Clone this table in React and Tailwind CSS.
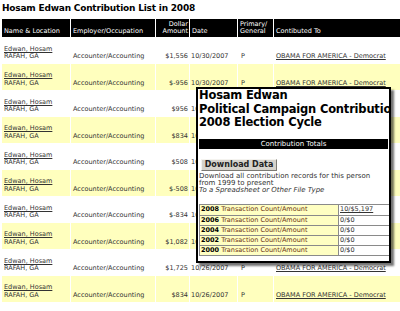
import React from 'react';

const rows = [
  { amount: '$1,556', date: '10/30/2007' },
  { amount: '$-956', date: '10/30/2007' },
  { amount: '$956', date: '10/30/2007' },
  { amount: '$834', date: '10/30/2007' },
  { amount: '$508', date: '10/30/2007' },
  { amount: '$-508', date: '10/30/2007' },
  { amount: '$-834', date: '10/30/2007' },
  { amount: '$1,082', date: '10/30/2007' },
  { amount: '$1,725', date: '10/26/2007' },
  { amount: '$834', date: '10/26/2007' },
];

const totals = [
  { year: '2008', value: '10/$5,197', link: true },
  { year: '2006', value: '0/$0' },
  { year: '2004', value: '0/$0' },
  { year: '2002', value: '0/$0' },
  { year: '2000', value: '0/$0' },
];

const cols = 'grid grid-cols-[68px_84px_33px_47px_35px_130px] gap-x-px';

const ContributionPopup = () => (
  <div className="absolute left-[196px] top-[87px] w-[195px] h-[176px] border-2 border-black bg-white shadow-[3px_3px_2px_rgba(0,0,0,0.55)] overflow-hidden px-px">
    {/* Titre */}
    <div className="text-[11.5px] leading-[13.5px] font-bold text-black whitespace-nowrap tracking-[-0.2px]">
      <div>Hosam Edwan</div>
      <div>Political Campaign Contributions</div>
      <div>2008 Election Cycle</div>
    </div>

    <div className="mt-[9px] h-[10px] bg-black text-white text-[7px] leading-[10px] text-center">Contribution Totals</div>

    <div className="mt-[10px] ml-[2px] w-[76px] h-[12px] flex items-center justify-center bg-[#d6d3cc] border border-t-[#f4f3ef] border-l-[#f4f3ef] border-r-[#7c7a74] border-b-[#7c7a74] text-[8px] leading-[9px] font-bold text-[#222] whitespace-nowrap">
      Download Data
    </div>

    <div className="mt-[2px] text-[7px] leading-[7.4px] text-[#333] whitespace-nowrap">
      <div>Download all contribution records for this person</div>
      <div>from 1999 to present</div>
      <div className="italic">To a Spreadsheet or Other File Type</div>
    </div>

    {/* Totaux */}
    <div className="mt-[9px] w-[191px] border border-[#8a8a8a]">
      {totals.map((t, i) => (
        <div key={t.year} className={`grid grid-cols-[139px_1fr] h-[10px] ${i > 0 ? 'border-t border-[#8a8a8a]' : ''}`}>
          <div className="bg-[#ffffc2] border-r border-[#8a8a8a] text-[6.5px] leading-[9px] text-[#6b3414] pl-px whitespace-nowrap">
            <span className="font-bold text-black">{t.year}</span> Transaction Count/Amount
          </div>
          <div className={`text-[6.5px] leading-[9px] text-[#333] pl-px ${t.link ? 'underline' : ''}`}>{t.value}</div>
        </div>
      ))}
    </div>
  </div>
);

export default function App() {
  return (
    <div className="relative w-[400px] h-[311px] overflow-hidden bg-white font-['DejaVu_Sans',Verdana,sans-serif] text-[#333]">
      <div className="h-[19px] pl-[2px] pt-[3px] text-[9px] leading-[11px] font-bold text-black whitespace-nowrap tracking-[-0.2px]">
        Hosam Edwan Contribution List in 2008
      </div>

      {/* En-tête */}
      <div className={`${cols} pl-[2px] h-[18px] text-[6.5px] leading-[7px] text-white`}>
        <div className="bg-black flex items-end pb-[2px] pl-[2px]">Name &amp; Location</div>
        <div className="bg-black flex items-end pb-[2px] pl-[2px]">Employer/Occupation</div>
        <div className="bg-black flex flex-col items-end justify-end pb-[2px] pr-px text-right">
          <span>Dollar</span>
          <span>Amount</span>
        </div>
        <div className="bg-black flex items-end pb-[2px] pl-[2px]">Date</div>
        <div className="bg-black flex flex-col justify-end pb-[2px] pl-[2px]">
          <span>Primary/</span>
          <span>General</span>
        </div>
        <div className="bg-black flex items-end pb-[2px] pl-[2px]">Contibuted To</div>
      </div>

      {/* Lignes */}
      {rows.map((r, i) => {
        const bg = i % 2 === 1 ? 'bg-[#ffffbe]' : 'bg-white';
        return (
          <div key={i} className={`${cols} pl-[2px] h-[26.5px] text-[6.5px] leading-[7.5px] whitespace-nowrap`}>
            <div className={`${bg} flex flex-col justify-end pb-[3px] pl-[2px]`}>
              <span className="underline">Edwan, Hosam</span>
              <span>RAFAH, GA</span>
            </div>
            <div className={`${bg} flex items-end pb-[3px] pl-[2px]`}>Accounter/Accounting</div>
            <div className={`${bg} flex items-end justify-end pb-[3px] pr-px`}>{r.amount}</div>
            <div className={`${bg} flex items-end pb-[3px] pl-px`}>{r.date}</div>
            <div className={`${bg} flex items-end pb-[3px] pl-[3px]`}>P</div>
            <div className={`${bg} flex items-end pb-[3px] pl-[2px]`}>
              <span className="underline">OBAMA FOR AMERICA - Democrat</span>
            </div>
          </div>
        );
      })}

      <ContributionPopup />
    </div>
  );
}
